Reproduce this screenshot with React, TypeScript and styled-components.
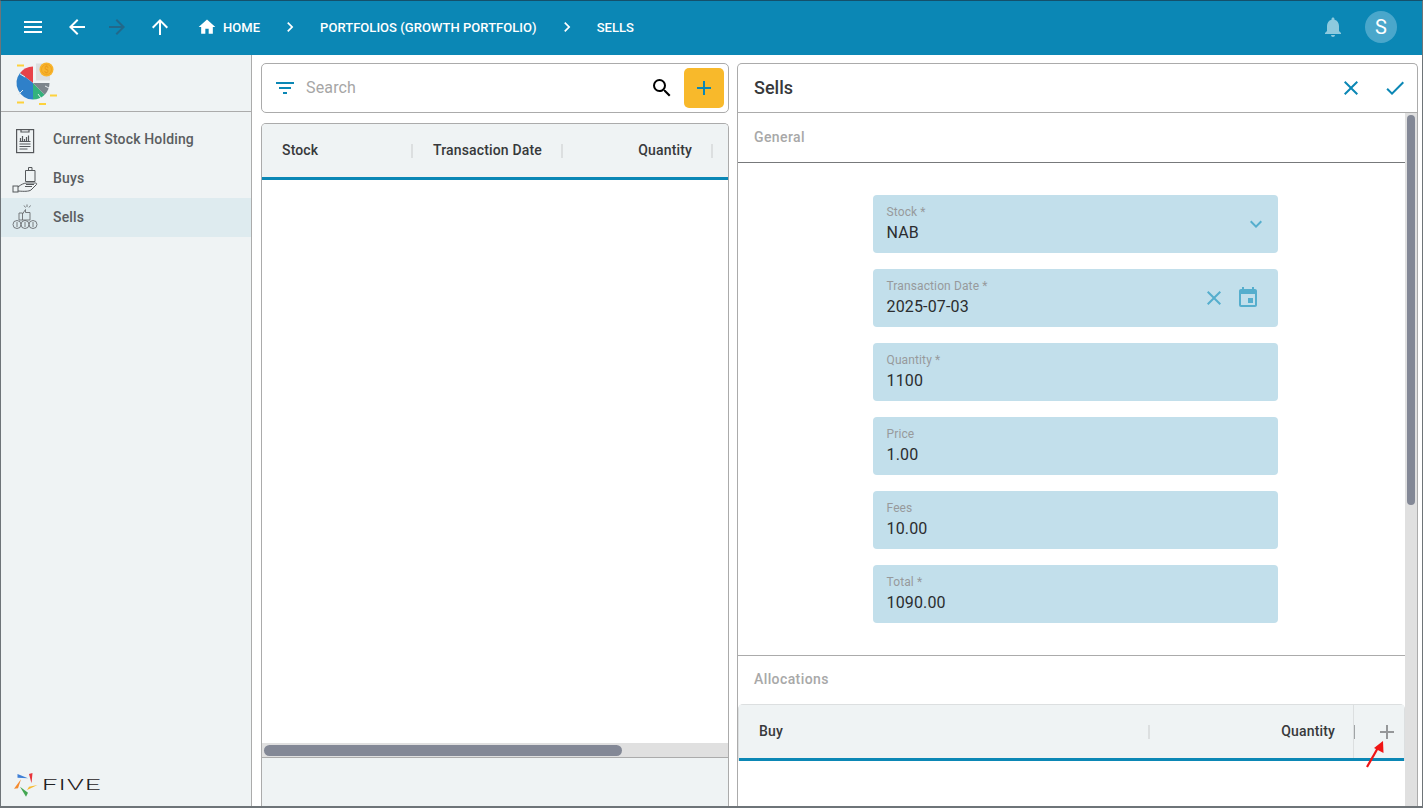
import React from "react";
import styled, { createGlobalStyle } from "styled-components";
import {
	MdAdd,
	MdArrowBack,
	MdArrowForward,
	MdArrowUpward,
	MdCheck,
	MdChevronRight,
	MdClose,
	MdEvent,
	MdExpandMore,
	MdFilterList,
	MdHome,
	MdMenu,
	MdNotifications,
	MdSearch,
} from "react-icons/md";

const BLUE = "#0b87b5";
const PALE = "#eff3f4";
const LINE = "#ababab";

const GlobalStyle = createGlobalStyle`
	html, body {
		margin: 0;
		padding: 0;
		background: #fff;
		font-family: Roboto, "Liberation Sans", sans-serif;
	}
	* {
		box-sizing: border-box;
	}
`;

const Frame = styled.div`
	position: relative;
	width: 1423px;
	height: 808px;
	display: flex;
	flex-direction: column;
	overflow: hidden;
	border: 1px solid #6e7478;
	border-top-color: #14506b;
	border-bottom-width: 2px;
`;

const TopBar = styled.header`
	flex: 0 0 54px;
	display: flex;
	align-items: center;
	padding: 0 9px 2px 12px;
	background: ${BLUE};
	color: #fff;
`;

const NavIcon = styled.span<{ $width: number; $dim?: boolean }>`
	flex: 0 0 ${(p) => p.$width}px;
	display: flex;
	justify-content: center;
	font-size: 24px;
	color: ${(p) => (p.$dim ? "#22688a" : "#fff")};
	svg {
		display: block;
	}
`;

const Crumb = styled.span`
	display: flex;
	align-items: center;
	gap: 6px;
	font-size: 13px;
	font-weight: 500;
	letter-spacing: 0.04px;
	white-space: nowrap;
`;

const HomeCrumb = styled(Crumb)`
	margin-left: 10px;
`;

const CrumbSep = styled.span`
	flex: 0 0 60px;
	display: flex;
	justify-content: center;
	font-size: 20px;
`;

const TopBarRight = styled.div`
	margin-left: auto;
	display: flex;
	align-items: center;
	gap: 20px;
	margin-right: 16px;
	font-size: 24px;
	color: #8dcade;
	svg {
		display: block;
	}
`;

const Avatar = styled.span`
	width: 32px;
	height: 32px;
	border-radius: 50%;
	display: flex;
	align-items: center;
	justify-content: center;
	background: #4aa7cb;
	color: #fff;
	font-size: 20px;
`;

const Body = styled.div`
	flex: 1;
	min-height: 0;
	display: flex;
`;

const Sidebar = styled.aside`
	flex: 0 0 251px;
	display: flex;
	flex-direction: column;
	background: ${PALE};
	border-right: 1px solid ${LINE};
`;

const LogoArea = styled.div`
	flex: 0 0 57px;
	padding: 5px 0 0 12px;
	border-bottom: 1px solid ${LINE};
	svg {
		display: block;
	}
`;

const NavList = styled.nav`
	padding-top: 8px;
`;

const NavItem = styled.div<{ $active?: boolean }>`
	height: 39px;
	display: flex;
	align-items: center;
	gap: 14px;
	padding-left: 10px;
	background: ${(p) => (p.$active ? "#deebef" : "transparent")};
	svg {
		display: block;
	}
`;

const NavLabel = styled.span`
	padding-bottom: 2px;
	font-size: 14px;
	font-weight: 500;
	letter-spacing: 0.15px;
	color: #5a5d60;
`;

const BrandFooter = styled.div`
	margin-top: auto;
	display: flex;
	align-items: center;
	gap: 3px;
	padding: 0 0 8px 12px;
	svg {
		display: block;
	}
`;

const BrandName = styled.span`
	display: inline-block;
	font-size: 14px;
	font-weight: 300;
	line-height: 14px;
	color: #1f2123;
	letter-spacing: 0.6px;
	transform: scaleX(1.95);
	transform-origin: left center;
`;

const ListColumn = styled.section`
	flex: 0 0 468px;
	margin-left: 9px;
	padding-top: 8px;
	display: flex;
	flex-direction: column;
	gap: 10px;
	min-height: 0;
`;

const SearchCard = styled.div`
	flex: 0 0 50px;
	display: flex;
	align-items: center;
	padding: 0 4px 0 11px;
	border: 1px solid ${LINE};
	border-radius: 5px;
	background: #fff;
`;

const FilterIcon = styled(MdFilterList)`
	font-size: 24px;
	color: ${BLUE};
`;

const Placeholder = styled.span`
	margin-left: 9px;
	padding-bottom: 1px;
	font-size: 16px;
	letter-spacing: 0.15px;
	color: #a6a6a6;
`;

const SearchIcon = styled(MdSearch)`
	margin-left: auto;
	font-size: 24px;
	color: #000;
`;

const AddButton = styled.span`
	margin-left: 10px;
	width: 40px;
	height: 40px;
	border-radius: 5px;
	display: flex;
	align-items: center;
	justify-content: center;
	background: #f8b92b;
	color: ${BLUE};
	font-size: 24px;
`;

const ListTable = styled.div`
	flex: 1;
	min-height: 0;
	display: flex;
	flex-direction: column;
	border: 1px solid ${LINE};
	border-bottom: 0;
	border-radius: 5px 5px 0 0;
	overflow: hidden;
`;

const HeadRow = styled.div`
	flex: 0 0 56px;
	display: flex;
	align-items: center;
	background: ${PALE};
	border-bottom: 3px solid ${BLUE};
`;

const HeadCell = styled.div<{ $width: number; $right?: boolean; $darkSep?: boolean }>`
	flex: 0 0 ${(p) => p.$width}px;
	height: 14px;
	display: flex;
	align-items: center;
	justify-content: ${(p) => (p.$right ? "flex-end" : "flex-start")};
	padding: 0 ${(p) => (p.$darkSep ? 18 : 19)}px 2px 20px;
	font-size: 14px;
	font-weight: 500;
	letter-spacing: 0.15px;
	color: #37393b;
	white-space: nowrap;
	border-right: 2px solid ${(p) => (p.$darkSep ? "#a0a4a6" : "#dcdfe0")};
`;

const ListRows = styled.div`
	flex: 1;
	background: #fff;
`;

const HScrollTrack = styled.div`
	flex: 0 0 15px;
	padding: 2px 0 1px 2px;
	background: #e0e0e0;
	border-bottom: 1px solid ${LINE};
`;

const HScrollThumb = styled.div`
	width: 358px;
	height: 11px;
	border-radius: 6px;
	background: #838896;
`;

const ListFooter = styled.div`
	flex: 0 0 48px;
	background: ${PALE};
`;

const DetailPanel = styled.section`
	flex: 0 0 681px;
	margin: 8px 0 0 8px;
	display: flex;
	flex-direction: column;
	min-height: 0;
	border: 1px solid ${LINE};
	border-bottom: 0;
	border-radius: 5px 5px 0 0;
`;

const DetailHeader = styled.div`
	flex: 0 0 49px;
	display: flex;
	align-items: center;
	padding: 0 10px 0 16px;
	border-bottom: 1px solid ${LINE};
`;

const DetailTitle = styled.h1`
	margin: 0;
	padding-bottom: 2px;
	font-size: 18px;
	font-weight: 500;
	color: #37393b;
`;

const DetailActions = styled.div`
	margin-left: auto;
	display: flex;
	gap: 20px;
	font-size: 24px;
	color: ${BLUE};
	svg {
		display: block;
	}
`;

const DetailBody = styled.div`
	flex: 1;
	min-height: 0;
	display: flex;
`;

const DetailScroll = styled.div`
	flex: 1;
	min-width: 0;
	overflow: hidden;
`;

const VScrollTrack = styled.div`
	flex: 0 0 12px;
	padding: 2px 2px 0 2px;
	background: #e0e0e0;
`;

const VScrollThumb = styled.div`
	height: 390px;
	border-radius: 5px;
	background: #838896;
`;

const SectionTitle = styled.div<{ $ruled?: boolean }>`
	height: ${(p) => (p.$ruled ? 50 : 48)}px;
	display: flex;
	align-items: center;
	padding: 0 0 ${(p) => (p.$ruled ? 1 : 2)}px 16px;
	font-size: 14px;
	font-weight: 500;
	letter-spacing: 0.4px;
	color: #a8a8a8;
	border-bottom: ${(p) => (p.$ruled ? "1px solid #77797b" : "0")};
`;

const FormArea = styled.div`
	display: flex;
	flex-direction: column;
	align-items: center;
	gap: 16px;
	padding: 32px 0 32px 7px;
	border-bottom: 1px solid ${LINE};
`;

const Field = styled.div`
	position: relative;
	width: 405px;
	height: 58px;
	padding: 10px 13px 0 14px;
	border-radius: 4px;
	background: #c2dfeb;
`;

const FieldLabel = styled.div`
	font-size: 12px;
	line-height: 14px;
	letter-spacing: 0.12px;
	color: #979a9c;
`;

const FieldValue = styled.div`
	margin-top: 4px;
	font-size: 16px;
	line-height: 20px;
	letter-spacing: 0.15px;
	color: #2b2d2f;
`;

const FieldIcons = styled.div<{ $right: number }>`
	position: absolute;
	right: ${(p) => p.$right}px;
	top: 17px;
	display: flex;
	gap: 10px;
	font-size: 24px;
	color: #55aecd;
	svg {
		display: block;
	}
`;

const AllocTable = styled.div`
	border: 1px solid #dcdfe0;
	border-bottom: 0;
	border-radius: 5px 5px 0 0;
	background: #fff;
`;

const AllocHead = styled(HeadRow)`
	height: 56px;
`;

const AddColumn = styled.div`
	flex: 1;
	align-self: stretch;
	display: flex;
	align-items: center;
	justify-content: center;
	margin-left: -2px;
	padding-left: 15px;
	color: #959799;
	font-size: 24px;
	border-left: 1px solid #dcdfe0;
`;

const MarkerArrow = styled.svg`
	position: absolute;
	left: 1361px;
	top: 737px;
`;

const ClipboardIcon = () => (
	<svg width="28" height="28" viewBox="0 0 28 28" fill="none" stroke="#55585b" strokeWidth="1.2">
		<rect x="5.6" y="3.6" width="17" height="23" />
		<path d="M10 3.6v2.4h8V3.6" />
		<path d="M8.5 15.5h11M9.5 15v-3M11.5 15V10M13.5 15v-2M15.5 15v-4M17.5 15V9.5M8.5 18h11M8.5 20.5h11M8.5 23h8" />
	</svg>
);

const HandBagIcon = () => (
	<svg width="28" height="28" viewBox="0 0 28 28" fill="none" stroke="#55585b" strokeWidth="1">
		<path d="M14.5 5.5H24v11h-9.500zM17.500 5.500v-3H21v3" />
		<rect x="2" y="21" width="5" height="6" />
		<path d="M7 22c3-2.500 6-4 9-4h8.500c1.500 0 1.500 1.500.5 2l-5 5c-2 1.500-7 1.500-13 1" />
		<path d="M14 21.500h7M15 19.500h8" />
	</svg>
);

const ThumbCoinsIcon = () => (
	<svg width="28" height="28" viewBox="0 0 28 28" fill="none" stroke="#6a6d70" strokeWidth="0.9">
		<path d="M8 9h3.500v7H8zM11.500 10l3-4.500v3H19v7.500h-7.500" />
		<path d="M16 .5V3M13 1.500l1.500 2M19.500 1.500L18 3.500" />
		<circle cx="6" cy="20.500" r="4" />
		<circle cx="14" cy="20.500" r="4" />
		<circle cx="22" cy="20.500" r="4" />
		<path d="M6 18v5M14 18v5M22 18v5" />
	</svg>
);

const AppLogo = () => (
	<svg width="46" height="46" viewBox="0 0 46 46">
		<rect x="23" y="3.500" width="14" height="17" fill="#dcdfe0" />
		<path d="M20 23L7 13A16.500 16.500 0 0 1 20 6.500Z" fill="#e8424a" />
		<path d="M20 23L20 39.500A16.500 16.500 0 0 1 7 13Z" fill="#2f80c9" />
		<path d="M20 23L20 39.500A16.500 16.500 0 0 0 31.700 34.700Z" fill="#33b27b" />
		<path d="M20 23L36.500 23A16.500 16.500 0 0 1 31.700 34.700Z" fill="#7c858c" />
		<path d="M5 35l5-5M25 34l3 4M32 26l4 2M7 14l5 3" stroke="#e6ebee" strokeWidth="1" />
		<circle cx="33.500" cy="9.500" r="7" fill="#f8b42c" />
		<circle cx="33.500" cy="9.500" r="5" fill="none" stroke="#e8991a" strokeWidth=".6" />
		<text x="33.500" y="12.500" fontSize="8.500" textAnchor="middle" fill="#e8991a" fontFamily="Roboto">
			$
		</text>
		<g fill="#fdd23c">
			<rect x="4" y="4.500" width="7" height="2" />
			<rect x="37" y="34.500" width="7" height="2" />
			<rect x="4" y="41.500" width="7" height="2" />
			<rect x="26" y="43" width="7" height="2" />
		</g>
	</svg>
);

const FiveMark = () => (
	<svg width="26" height="26" viewBox="0 0 26 26">
		<path d="M4.500 2L15 6.300 4.500 5.700Z" fill="#3f7fd6" />
		<path d="M16 2L19.500 1 18.500 11.300Z" fill="#e8333a" />
		<path d="M24.500 13L14 18 16 14.700Z" fill="#f8b92b" />
		<path d="M7 14.700L15 20.700 13 24.700Z" fill="#43a651" />
		<path d="M1 16.700L8 7.300 5 16.300Z" fill="#f58a2e" />
	</svg>
);

const fields = [
	{ label: "Quantity *", value: "1100" },
	{ label: "Price", value: "1.00" },
	{ label: "Fees", value: "10.00" },
	{ label: "Total *", value: "1090.00" },
];

export default function App() {
	return (
		<>
			<GlobalStyle />
			<Frame>
				<TopBar>
					<NavIcon $width={40}><MdMenu /></NavIcon>
					<NavIcon $width={48}><MdArrowBack /></NavIcon>
					<NavIcon $width={32} $dim><MdArrowForward /></NavIcon>
					<NavIcon $width={54}><MdArrowUpward /></NavIcon>
					<HomeCrumb>
						<MdHome size={20} />
						HOME
					</HomeCrumb>
					<CrumbSep><MdChevronRight /></CrumbSep>
					<Crumb>PORTFOLIOS (GROWTH PORTFOLIO)</Crumb>
					<CrumbSep><MdChevronRight /></CrumbSep>
					<Crumb>SELLS</Crumb>
					<TopBarRight>
						<MdNotifications />
						<Avatar>S</Avatar>
					</TopBarRight>
				</TopBar>
				<Body>
					<Sidebar>
						<LogoArea><AppLogo /></LogoArea>
						<NavList>
							<NavItem><ClipboardIcon /><NavLabel>Current Stock Holding</NavLabel></NavItem>
							<NavItem><HandBagIcon /><NavLabel>Buys</NavLabel></NavItem>
							<NavItem $active><ThumbCoinsIcon /><NavLabel>Sells</NavLabel></NavItem>
						</NavList>
						<BrandFooter>
							<FiveMark />
							<BrandName>FIVE</BrandName>
						</BrandFooter>
					</Sidebar>
					<ListColumn>
						<SearchCard>
							<FilterIcon />
							<Placeholder>Search</Placeholder>
							<SearchIcon />
							<AddButton><MdAdd /></AddButton>
						</SearchCard>
						<ListTable>
							<HeadRow>
								<HeadCell $width={151}>Stock</HeadCell>
								<HeadCell $width={150}>Transaction Date</HeadCell>
								<HeadCell $width={150} $right>Quantity</HeadCell>
							</HeadRow>
							<ListRows />
							<HScrollTrack><HScrollThumb /></HScrollTrack>
							<ListFooter />
						</ListTable>
					</ListColumn>
					<DetailPanel>
						<DetailHeader>
							<DetailTitle>Sells</DetailTitle>
							<DetailActions>
								<MdClose />
								<MdCheck />
							</DetailActions>
						</DetailHeader>
						<DetailBody>
							<DetailScroll>
								<SectionTitle $ruled>General</SectionTitle>
								<FormArea>
									<Field>
										<FieldLabel>Stock *</FieldLabel>
										<FieldValue>NAB</FieldValue>
										<FieldIcons $right={10}><MdExpandMore /></FieldIcons>
									</Field>
									<Field>
										<FieldLabel>Transaction Date *</FieldLabel>
										<FieldValue>2025-07-03</FieldValue>
										<FieldIcons $right={18}>
											<MdClose />
											<MdEvent />
										</FieldIcons>
									</Field>
									{fields.map((field) => (
										<Field key={field.label}>
											<FieldLabel>{field.label}</FieldLabel>
											<FieldValue>{field.value}</FieldValue>
										</Field>
									))}
								</FormArea>
								<SectionTitle>Allocations</SectionTitle>
								<AllocTable>
									<AllocHead>
										<HeadCell $width={411}>Buy</HeadCell>
										<HeadCell $width={205} $right $darkSep>Quantity</HeadCell>
										<AddColumn><MdAdd /></AddColumn>
									</AllocHead>
								</AllocTable>
							</DetailScroll>
							<VScrollTrack><VScrollThumb /></VScrollTrack>
						</DetailBody>
					</DetailPanel>
				</Body>
				<MarkerArrow width="26" height="34" viewBox="0 0 26 34">
					<path d="M5 29L17 8" stroke="#f01414" strokeWidth="2.2" />
					<path d="M21 3L21.500 15 12 10Z" fill="#f01414" />
				</MarkerArrow>
			</Frame>
		</>
	);
}
